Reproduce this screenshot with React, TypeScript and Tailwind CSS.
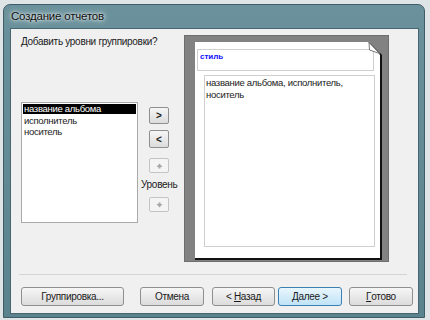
const font = { fontFamily: '"Liberation Sans", "DejaVu Sans", sans-serif' };

function Btn({ children, w, primary }: { children: React.ReactNode; w: string; primary?: boolean }) {
  return (
    <div
      className={`${w} h-[19px] flex items-center justify-center rounded-[3px] border text-[10px] tracking-[-0.3px] text-[#1a1a1a] ${
        primary
          ? "border-[#3c7fb1] bg-gradient-to-b from-[#eaf6fd] to-[#bfe3f7]"
          : "border-[#8e8f8f] bg-gradient-to-b from-[#f6f6f6] to-[#dcdcdc]"
      }`}
    >
      {children}
    </div>
  );
}

function SmallBtn({ children, h, disabled }: { children: React.ReactNode; h: string; disabled?: boolean }) {
  return (
    <div
      className={`w-[20px] ${h} flex items-center justify-center rounded-[2px] border ${
        disabled ? "border-[#c4c4c4] bg-[#f4f4f4]" : "border-[#8e8f8f] bg-gradient-to-b from-[#f6f6f6] to-[#dcdcdc]"
      }`}
    >
      {children}
    </div>
  );
}

export default function App() {
  return (
    <div className="w-[430px] h-[320px] overflow-hidden bg-[#dfe4e7] pt-[4px] pl-[3px] pr-[5px] pb-[2px]" style={font}>
      {/* window */}
      <div className="h-full flex flex-col rounded-t-[7px] border border-[#3f5d66] bg-gradient-to-b from-[#6b929c] to-[#5b838d] pl-[6px] pr-[5px] pb-[3px]">
        {/* title bar */}
        <div
          className="h-[23px] flex items-center pl-[1px] text-[11.5px] tracking-[-0.2px] text-[#101010]"
          style={{ textShadow: "0 0 6px #ffffff, 0 0 3px #ffffff" }}
        >
          Создание отчетов
        </div>

        {/* client */}
        <div className="flex-1 flex flex-col bg-[#f0f0f0] border border-[#47666f]">
          <div className="flex pl-[10px] pt-[6px]">
            {/* left side */}
            <div className="w-[163px] flex flex-col">
              <div className="h-[14px] leading-[14px] text-[10px] tracking-[-0.3px] text-[#1a1a1a]">Добавить уровни группировки?</div>
              <div className="flex mt-[53px]">
                <div className="w-[117px] h-[121px] bg-white border border-[#a9a9a9] p-[1px] text-[9.5px] tracking-[-0.3px] text-[#1a1a1a]">
                  <div className="h-[10px] leading-[10px] bg-black text-white pl-[1px]">название альбома</div>
                  <div className="h-[11px] leading-[11px] mt-[1px] pl-[1px]">исполнитель</div>
                  <div className="h-[11px] leading-[11px] pl-[1px]">носитель</div>
                </div>
                <div className="ml-[11px] w-[28px] flex flex-col">
                  <div className="mt-[5px]">
                    <SmallBtn h="h-[17px]">
                      <span className="text-[10px] font-bold text-[#222]">&gt;</span>
                    </SmallBtn>
                  </div>
                  <div className="mt-[6px]">
                    <SmallBtn h="h-[18px]">
                      <span className="text-[10px] font-bold text-[#222]">&lt;</span>
                    </SmallBtn>
                  </div>
                  <div className="mt-[10px]">
                    <SmallBtn h="h-[15px]" disabled>
                      <svg width="7" height="6" viewBox="0 0 7 6"><path d="M3.5 0.5L6.5 4H4.5V5.5H2.5V4H0.5Z" fill="#a8a8a8" /></svg>
                    </SmallBtn>
                  </div>
                  <div className="-ml-[8px] w-[40px] mt-[5px] h-[14px] leading-[14px] text-[10px] tracking-[-0.3px] text-[#1a1a1a]">Уровень</div>
                  <div className="mt-[5px]">
                    <SmallBtn h="h-[15px]" disabled>
                      <svg width="7" height="6" viewBox="0 0 7 6"><path d="M3.5 5.5L6.5 2H4.5V0.5H2.5V2H0.5Z" fill="#a8a8a8" /></svg>
                    </SmallBtn>
                  </div>
                </div>
              </div>
            </div>

            {/* preview */}
            <div className="w-[205px] h-[227px] bg-[#828282] border border-[#6e6e6e] pl-[10px] pt-[6px]">
              <div className="relative w-[187px] h-[218px] border-r-[2px] border-b-[2px] border-[#111]">
                <div className="w-[185px] h-[216px] bg-white pl-[2px] pt-[7px]">
                  <div className="w-[177px] h-[22px] border border-[#cfcfcf] pl-[2px] pt-[2px] text-[8px] font-bold text-[#1010ff] leading-[10px]">
                    стиль
                  </div>
                  <div className="ml-[7px] mt-[4px] w-[171px] h-[172px] border border-[#cfcfcf] pl-[1px] pt-[1px] text-[9.5px] tracking-[-0.3px] leading-[12px] text-[#1a1a1a]">
                    название альбома, исполнитель,
                    <br />
                    носитель
                  </div>
                </div>
                {/* dog ear */}
                <svg className="absolute -right-[2px] top-0" width="14" height="13" viewBox="0 0 14 13">
                  <path d="M1 0H14V13Z" fill="#828282" />
                  <path d="M1 0.5L12 11.5L12 13" fill="none" stroke="#111" strokeWidth="1" />
                  <path d="M1 0.5L1.5 8L11.5 11.5Z" fill="#ffffff" stroke="#555" strokeWidth="0.8" />
                </svg>
              </div>
            </div>
          </div>

          {/* separator */}
          <div className="ml-[8px] mr-[11px] mt-[12px] h-[2px] border-t border-[#d5d5d5] border-b-white" />

          {/* buttons */}
          <div className="flex ml-[10px] mt-[11px]">
            <Btn w="w-[103px]">Группировка...</Btn>
            <div className="ml-[16px]">
              <Btn w="w-[64px]">Отмена</Btn>
            </div>
            <div className="ml-[8px]">
              <Btn w="w-[63px]">
                &lt;&nbsp;<span className="underline">Н</span>азад
              </Btn>
            </div>
            <div className="ml-[3px]">
              <Btn w="w-[64px]" primary>
                <span className="underline">Д</span>алее &gt;
              </Btn>
            </div>
            <div className="ml-[7px]">
              <Btn w="w-[64px]">
                <span className="underline">Г</span>отово
              </Btn>
            </div>
          </div>
        </div>
      </div>
    </div>
  );
}
